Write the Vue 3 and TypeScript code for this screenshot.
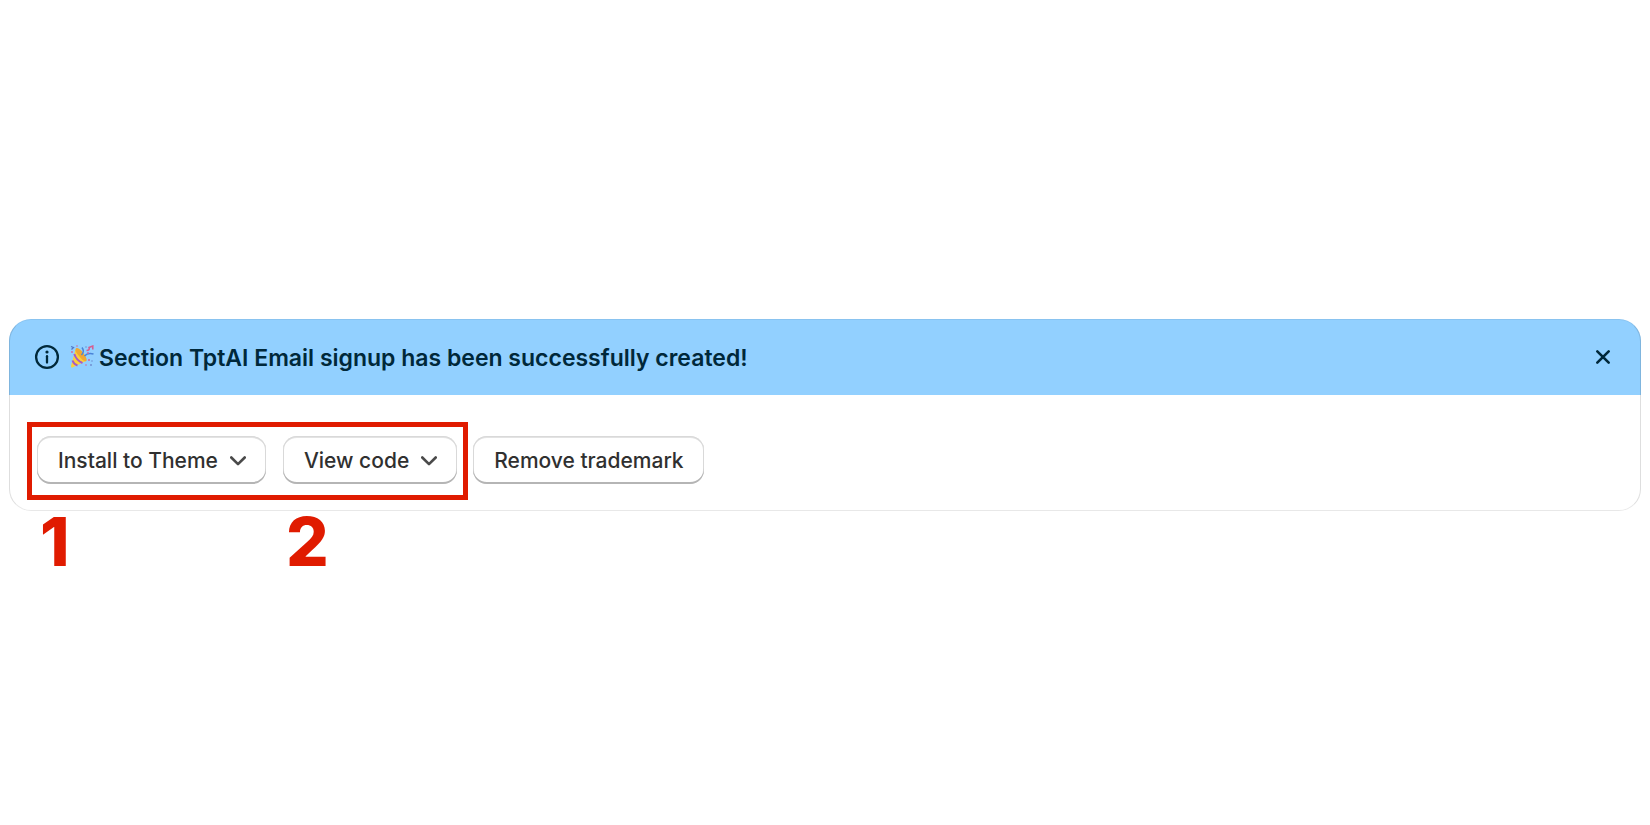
<script setup lang="ts">
import { ref } from 'vue'

interface Action {
  label: string
  step: string
}

const open = ref(true)
const menuActions: Action[] = [
  { label: 'Install to Theme', step: '1' },
  { label: 'View code', step: '2' },
]
</script>

<template>
  <main class="page">
    <section v-if="open" class="banner" aria-labelledby="banner-title">
      <header class="banner-head">
        <svg class="info" viewBox="0 0 24 24" aria-hidden="true">
          <circle cx="12" cy="12" r="10.9" fill="none" stroke="currentColor" stroke-width="2.3" />
          <circle cx="12" cy="7" r="1.6" fill="currentColor" />
          <path d="M12 11.200v6.300" stroke="currentColor" stroke-width="2.300" stroke-linecap="round" />
        </svg>
        <svg class="party" viewBox="0 0 24 24" aria-hidden="true">
          <path d="M5.500 4.500 16 16 2.500 22.500Q.8 23 1 21Z" fill="#fbd03d" />
          <path d="M5.500 4.500C6.500 1 10.500 4 13 7.500S18 15.500 16 16.200 11.500 14 9 11 5 6 5.500 4.500Z" fill="#f0a832" />
          <path d="M4.300 9Q6.500 15.500 12.500 18M2.500 15.500Q4 19.500 7.500 20.500" fill="none" stroke="#a55ac8" stroke-width="2" />
          <path d="M11.500 10Q15 6.500 12 2.500M14.500 11Q17.500 7.500 23.500 9" fill="none" stroke="#4a83d8" stroke-width="1.500" />
          <path d="M1 1.500 3.500 2.500 1.500 4.500" fill="none" stroke="#5377c9" stroke-width="1.300" />
          <path d="M16.500 5.500Q20 5.500 19 2.500L22.800 1V4.500" fill="none" stroke="#d75c90" stroke-width="1.500" />
          <g fill="#d5639a">
            <circle cx="2" cy="7" r=".9" /><circle cx="18" cy="8" r=".9" />
            <circle cx="19" cy="15" r="1" /><circle cx="16" cy="20" r=".8" />
            <circle cx="7" cy="1" r=".8" />
          </g>
          <g fill="#718fd1">
            <circle cx="22" cy="16" r=".8" /><circle cx="21" cy="20" r="1" /><circle cx="16" cy="2" r=".8" />
          </g>
        </svg>
        <h1 id="banner-title" class="title">Section TptAI Email signup has been successfully created!</h1>
        <button class="close" type="button" aria-label="Dismiss" @click="open = false">
          <svg viewBox="0 0 16 16" aria-hidden="true">
            <path d="M2.300 2.300 13.700 13.700M13.700 2.300 2.300 13.700" stroke="currentColor" stroke-width="2.600" stroke-linecap="round" />
          </svg>
        </button>
      </header>
      <div class="banner-body">
        <div class="marked">
          <div v-for="action in menuActions" :key="action.step" class="item">
            <button class="btn" type="button" aria-haspopup="menu">
              {{ action.label }}
              <svg class="chevron" viewBox="0 0 16 10" aria-hidden="true">
                <path d="M1.300 1.500 8 8.200 14.700 1.500" fill="none" stroke="#4a4a4a" stroke-width="2.600" stroke-linecap="round" stroke-linejoin="round" />
              </svg>
            </button>
            <span class="step">{{ action.step }}</span>
          </div>
        </div>
        <button class="btn" type="button">Remove trademark</button>
      </div>
    </section>
  </main>
</template>

<style>
body {
  margin: 0;
  background: #fff;
}
</style>

<style scoped>
.page {
  box-sizing: border-box;
  min-height: 100vh;
  padding: 319px 9px 0;
  font-family: Inter, "Liberation Sans", sans-serif;
}
.banner {
  position: relative;
  border-radius: 22px;
}
.banner::after {
  content: "";
  position: absolute;
  inset: 0;
  border: 1px solid rgba(0, 0, 0, 0.13);
  border-top-color: rgba(0, 0, 0, 0.06);
  border-bottom-color: rgba(0, 0, 0, 0.09);
  border-radius: inherit;
  pointer-events: none;
}
.banner-head {
  display: flex;
  align-items: center;
  box-sizing: border-box;
  height: 76px;
  padding: 0 26px;
  border-radius: 22px 22px 0 0;
  background: #92d0ff;
  color: #00283a;
}
.info {
  width: 24px;
  height: 24px;
  overflow: visible;
}
.party {
  width: 24px;
  height: 24px;
  margin: 0 5px 0 11px;
}
.title {
  flex: 1;
  margin: 0;
  padding-top: 2px;
  font-size: 23px;
  line-height: 28px;
  font-weight: 600;
}
.close {
  display: grid;
  place-items: center;
  width: 24px;
  height: 24px;
  padding: 0;
  border: 0;
  background: none;
  color: inherit;
  cursor: pointer;
}
.close svg {
  width: 16px;
  height: 16px;
}
.banner-body {
  display: flex;
  align-items: center;
  gap: 5px;
  padding: 27px 18px 11px;
}
.marked {
  display: flex;
  gap: 17px;
  padding: 9px 6px 11px 5px;
  border: 5px solid #e01b00;
}
.item {
  position: relative;
}
.btn {
  display: flex;
  align-items: center;
  gap: 12px;
  height: 48px;
  padding: 2px 20px 0 21px;
  border: 0;
  border-radius: 14px;
  background: #fff;
  box-shadow: inset 0 -2px #b5b5b5, inset 0 0 0 1px #d9d9d9, inset 0 2px #e3e3e3;
  color: #303030;
  font-family: inherit;
  font-size: 21px;
  line-height: 28px;
  font-weight: 500;
  white-space: nowrap;
  cursor: pointer;
}
.banner-body > .btn {
  margin-bottom: 2px;
}
.chevron {
  width: 16px;
  height: 10px;
}
.step {
  position: absolute;
  top: 72px;
  left: 3px;
  color: #e01b00;
  font-size: 67px;
  line-height: 67px;
  font-weight: 800;
}
</style>
